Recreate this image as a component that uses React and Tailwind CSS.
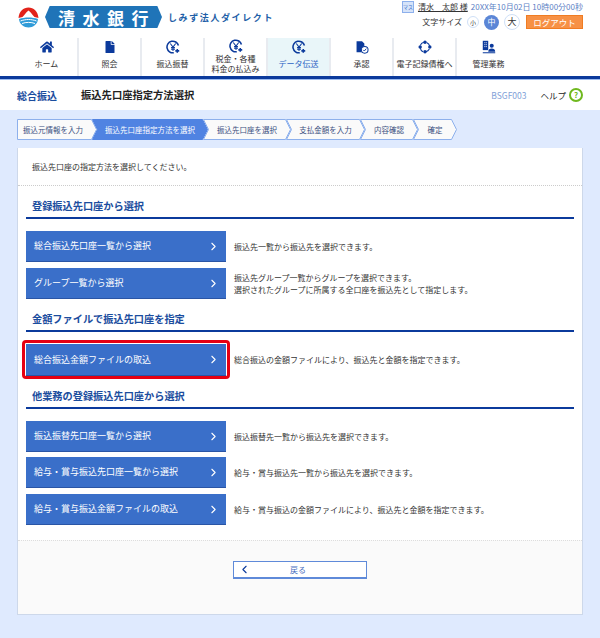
import { ChevronRight, ChevronLeft } from "lucide-react";
import { FaHome, FaFile } from "react-icons/fa";

const font = "font-['Noto_Sans_CJK_JP','Noto_Sans',sans-serif]";

// yen coin with arrows, used on three nav items
function YenIcon() {
  return (
    <svg width="14" height="14" viewBox="0 0 18 18" fill="none">
      <path d="M16 7A7.500 7.500 0 1 0 10 16.400" stroke="#0b3a9c" strokeWidth="2" />
      <path d="M5.500 4.500 9 9.200l3.500-4.700M9 9.200v4.800M6.500 9.800h5M6.500 12h5" stroke="#0b3a9c" strokeWidth="1.300" />
      <path d="M12 14h5M14.500 11.500v5" stroke="#0b3a9c" strokeWidth="2" />
    </svg>
  );
}

function ApproveIcon() {
  return (
    <svg width="14" height="15" viewBox="0 0 18 18" fill="none">
      <path d="M2 1h7l3 3v3.500A5 5 0 0 0 8.500 15H2z" fill="#0b3a9c" />
      <circle cx="12.500" cy="12" r="4.300" stroke="#0b3a9c" strokeWidth="1.300" fill="#fff" />
      <path d="M10.500 12l1.500 1.500 2.500-3" stroke="#0b3a9c" strokeWidth="1.200" />
    </svg>
  );
}

function RecordIcon() {
  return (
    <svg width="14" height="14" viewBox="0 0 18 18" fill="none">
      <path d="M11.500 3.400A6.200 6.200 0 0 1 15 8M14.600 11.600A6.200 6.200 0 0 1 10 15M6.400 15A6.200 6.200 0 0 1 3 10.400M3 7A6.200 6.200 0 0 1 7.400 3" stroke="#0b3a9c" strokeWidth="1.400" />
      <circle cx="9" cy="2.800" r="2.200" fill="#0b3a9c" />
      <circle cx="15.200" cy="9" r="2.200" fill="#0b3a9c" />
      <circle cx="9" cy="15.200" r="2.200" fill="#0b3a9c" />
      <circle cx="2.800" cy="9" r="2.200" fill="#0b3a9c" />
    </svg>
  );
}

function AdminIcon() {
  return (
    <svg width="14" height="14" viewBox="0 0 18 18" fill="none">
      <path d="M1 1h7v12H1z" fill="#0b3a9c" />
      <path d="M3 3.500h1.400M5.400 3.500h1M3 6h1.400M5.400 6h1M3 8.500h1.400M5.400 8.500h1" stroke="#fff" strokeWidth="1.100" />
      <circle cx="12.500" cy="7.500" r="2.600" fill="#0b3a9c" />
      <path d="M8 15c0-3 2-4 4.500-4s4.500 1 4.500 4z" fill="#0b3a9c" />
      <path d="M1 16.400h16" stroke="#0b3a9c" strokeWidth="1.300" />
    </svg>
  );
}

function LogoMark() {
  return (
    <svg width="21" height="21" viewBox="0 0 21 21">
      <path d="M0.500 11C1 4.500 5.500 0.500 10.500 0.500S20 4.500 20.500 11L16.500 10C14.500 8.500 13 5 10.500 3.500 8 5 6.500 8.500 4.500 10z" fill="#e2231a" />
      <path d="M1 12c5.500-2 13.500-2 19 0C19.500 17.500 15 20.500 10.500 20.500S1.500 17.500 1 12z" fill="#2f9bd8" />
      <path d="M2.500 14c5-2 11-2 16 0M4 16.500c4-1.500 9-1.500 13 0" stroke="#fff" strokeWidth="1" fill="none" />
    </svg>
  );
}

const navItems = [
  { label: "ホーム", icon: <FaHome size={14} color="#0b3a9c" /> },
  { label: "照会", icon: <FaFile size={12} color="#0b3a9c" /> },
  { label: "振込振替", icon: <YenIcon /> },
  { label: "税金・各種\n料金の払込み", icon: <YenIcon /> },
  { label: "データ伝送", icon: <YenIcon />, active: true },
  { label: "承認", icon: <ApproveIcon /> },
  { label: "電子記録債権へ", icon: <RecordIcon /> },
  { label: "管理業務", icon: <AdminIcon /> },
];

const steps = [
  { label: "振込元情報を入力", w: 80 },
  { label: "振込先口座指定方法を選択", w: 116, active: true },
  { label: "振込先口座を選択", w: 88 },
  { label: "支払金額を入力", w: 79 },
  { label: "内容確認", w: 58 },
  { label: "確定", w: 44 },
];

function NavItem({ item, last }) {
  const multi = item.label.includes("\n");
  return (
    <div className={`w-[63px] h-[38px] flex flex-col items-center ${last ? "" : "border-r-2 border-[#e8ebf0]"} ${item.active ? "bg-[#e9f6f9]" : ""}`}>
      <div className={`${multi ? "h-[16px]" : "h-[18px]"} flex items-center justify-center`}>{item.icon}</div>
      <div className={`whitespace-pre text-center text-[8px] leading-[10px] ${multi ? "" : "mt-[3px]"} ${item.active ? "text-[#2b63c4]" : "text-[#333]"}`}>
        {item.label}
      </div>
    </div>
  );
}

function Step({ step, first }) {
  const { w, active } = step;
  // first step has a flat left edge, the others are notched to take the previous tip
  const notch = first ? "" : "L5.500 10.500 ";
  return (
    <div className={`relative h-[21px] shrink-0 ${first ? "" : "-ml-[5px]"}`} style={{ width: w }}>
      <svg className="absolute inset-0" width={w} height="21">
        <path
          d={`M0.500 0.500H${w - 5.5}L${w - 0.5} 10.500 ${w - 5.5} 20.500H0.500${notch}Z`}
          fill={active ? "#5083e2" : "#fafafa"}
          stroke={active ? "#5083e2" : "#8db0ec"}
        />
      </svg>
      <div className={`relative h-full flex items-center justify-center text-[7.500px] whitespace-nowrap ${first ? "pr-[8px]" : ""} ${active ? "text-white" : "text-[#3a4f80]"}`}>
        {step.label}
      </div>
    </div>
  );
}

function Heading({ children }) {
  return (
    <div className="mx-[8px] mt-[14px] border-b-2 border-[#0b3a9c] h-[19px] pl-[6px] text-[10.200px] leading-[12px] font-bold text-[#1b4d9e] whitespace-nowrap">
      {children}
    </div>
  );
}

function ActionRow({ label, desc, highlight, className }) {
  return (
    <div className={`relative mx-[8px] flex items-center ${className}`}>
      {highlight && (
        <div className="absolute -left-[4px] -top-[4px] -bottom-[3px] w-[208px] border-[3px] border-[#e60012] rounded-[4px]" />
      )}
      <div className={`w-[200px] ${highlight ? "h-[32px]" : "h-[31px]"} shrink-0 bg-[#3a6fc9] border-b border-[#2a55a5] flex items-center justify-between pl-[8px] pr-[6px] text-white text-[9px] whitespace-nowrap`}>
        <span>{label}</span>
        <ChevronRight size={13} strokeWidth={2} />
      </div>
      <div className="ml-[8px] text-[8px] leading-[12px] text-[#333] whitespace-pre-line">{desc}</div>
    </div>
  );
}

export default function App() {
  return (
    <div className={`w-[600px] h-[638px] bg-[#dfeafe] overflow-hidden ${font}`}>
      {/* header */}
      <div className="bg-white h-[110px]">
        <div className="h-[38px] flex justify-between">
          <div className="flex items-start pt-[6px] pl-[18px]">
            <div className="mt-[1px]"><LogoMark /></div>
            <div className="ml-[6px] w-[117px] h-[22px] bg-[#1f74b8] [clip-path:polygon(4%_0,96%_0,100%_50%,96%_100%,4%_100%,0_50%)] flex items-center justify-center text-white text-[17px] font-bold tracking-[7.500px] leading-none pl-[7px] whitespace-nowrap">
              清水銀行
            </div>
            <div className="ml-[6px] mt-[5px] text-[9px] font-bold text-[#1f5fa8] tracking-[1.600px] whitespace-nowrap">しみず法人ダイレクト</div>
          </div>
          <div className="flex flex-col items-end pr-[17px] pt-[1px]">
            <div className="flex items-center text-[8px] h-[12px] whitespace-nowrap">
              <span className="w-[12px] h-[12px] bg-[#d5e3f9] border border-[#8db0ec] text-[#3b6fc9] text-[5px] leading-[10px] text-center mr-[4px]">マス</span>
              <span className="text-[#333] underline">清水　太郎 様</span>
              <span className="ml-[3px] text-[#5d7fc5]">20XX年10月02日 10時00分00秒</span>
            </div>
            <div className="flex items-center mt-[1px] text-[8px] text-[#333] whitespace-nowrap">
              <span>文字サイズ</span>
              <span className="ml-[5px] w-[12px] h-[12px] rounded-full border border-[#cfe0f7] text-[6px] flex items-center justify-center">小</span>
              <span className="ml-[5px] w-[15px] h-[15px] rounded-full bg-[#5b86d6] text-white text-[8px] flex items-center justify-center">中</span>
              <span className="ml-[5px] w-[16px] h-[16px] rounded-full border border-[#cfe0f7] text-[9px] flex items-center justify-center">大</span>
              <span className="ml-[6px] w-[57px] h-[14px] bg-[#f79145] border border-[#f07c22] text-white text-[8.500px] flex items-center justify-center">ログアウト</span>
            </div>
          </div>
        </div>
        <div className="h-[38px] flex pl-[16px]">
          {navItems.map((item, i) => (
            <NavItem key={item.label} item={item} last={i === navItems.length - 1} />
          ))}
        </div>
        <div className="h-[4px] border-t-[3px] border-[#0b3a9c] border-b border-b-[#9dbcf0]" />
        <div className="h-[30px] flex items-center px-[17px] whitespace-nowrap">
          <span className="font-bold text-[10px] text-[#1b4d9e]">総合振込</span>
          <span className="ml-[24px] font-bold text-[10.300px] text-[#222]">振込先口座指定方法選択</span>
          <span className="ml-auto text-[8.500px] text-[#7f9fd8]">BSGF003</span>
          <span className="ml-[14px] text-[8.500px] text-[#222]">ヘルプ</span>
          <span className="ml-[3px] w-[14px] h-[14px] rounded-full border-2 border-[#6fb81e] text-[#6fb81e] text-[8px] font-bold flex items-center justify-center">?</span>
        </div>
      </div>

      {/* stepper */}
      <div className="flex pl-[17px] pt-[9px] h-[38px]">
        {steps.map((s, i) => (
          <Step key={s.label} step={s} first={i === 0} />
        ))}
      </div>

      {/* card */}
      <div className="mx-[17px] w-[566px] h-[467px] bg-white border-x border-b border-[#cdd8ea] flex flex-col">
        <div className="h-[38px] border-b border-dotted border-[#ccc] pl-[14px] pt-[13px] text-[8px] leading-[12px] text-[#333]">
          振込先口座の指定方法を選択してください。
        </div>
        <Heading>登録振込先口座から選択</Heading>
        <ActionRow className="mt-[12px]" label="総合振込先口座一覧から選択" desc="振込先一覧から振込先を選択できます。" />
        <ActionRow className="mt-[6px]" label="グループ一覧から選択" desc={"振込先グループ一覧からグループを選択できます。\n選択されたグループに所属する全口座を振込先として指定します。"} />
        <Heading>金額ファイルで振込先口座を指定</Heading>
        <ActionRow highlight className="mt-[12px]" label="総合振込金額ファイルの取込" desc="総合振込の金額ファイルにより、振込先と金額を指定できます。" />
        <Heading>他業務の登録振込先口座から選択</Heading>
        <ActionRow className="mt-[12px]" label="振込振替先口座一覧から選択" desc="振込振替先一覧から振込先を選択できます。" />
        <ActionRow className="mt-[5px]" label="給与・賞与振込先口座一覧から選択" desc="給与・賞与振込先一覧から振込先を選択できます。" />
        <ActionRow className="mt-[6px]" label="給与・賞与振込金額ファイルの取込" desc="給与・賞与振込の金額ファイルにより、振込先と金額を指定できます。" />
        <div className="mt-[15px] flex-1 bg-[#fafafa] border-t border-dotted border-[#ddd] flex justify-center pt-[20px]">
          <div className="relative w-[134px] h-[18px] bg-white border border-[#5f8ad9] border-b-2 flex items-center justify-center pr-[4px] text-[8px] text-[#4a6fc0]">
            <ChevronLeft className="absolute left-[4px] top-[1px] text-[#0b3a9c]" size={13} strokeWidth={2} />
            戻る
          </div>
        </div>
      </div>
    </div>
  );
}
